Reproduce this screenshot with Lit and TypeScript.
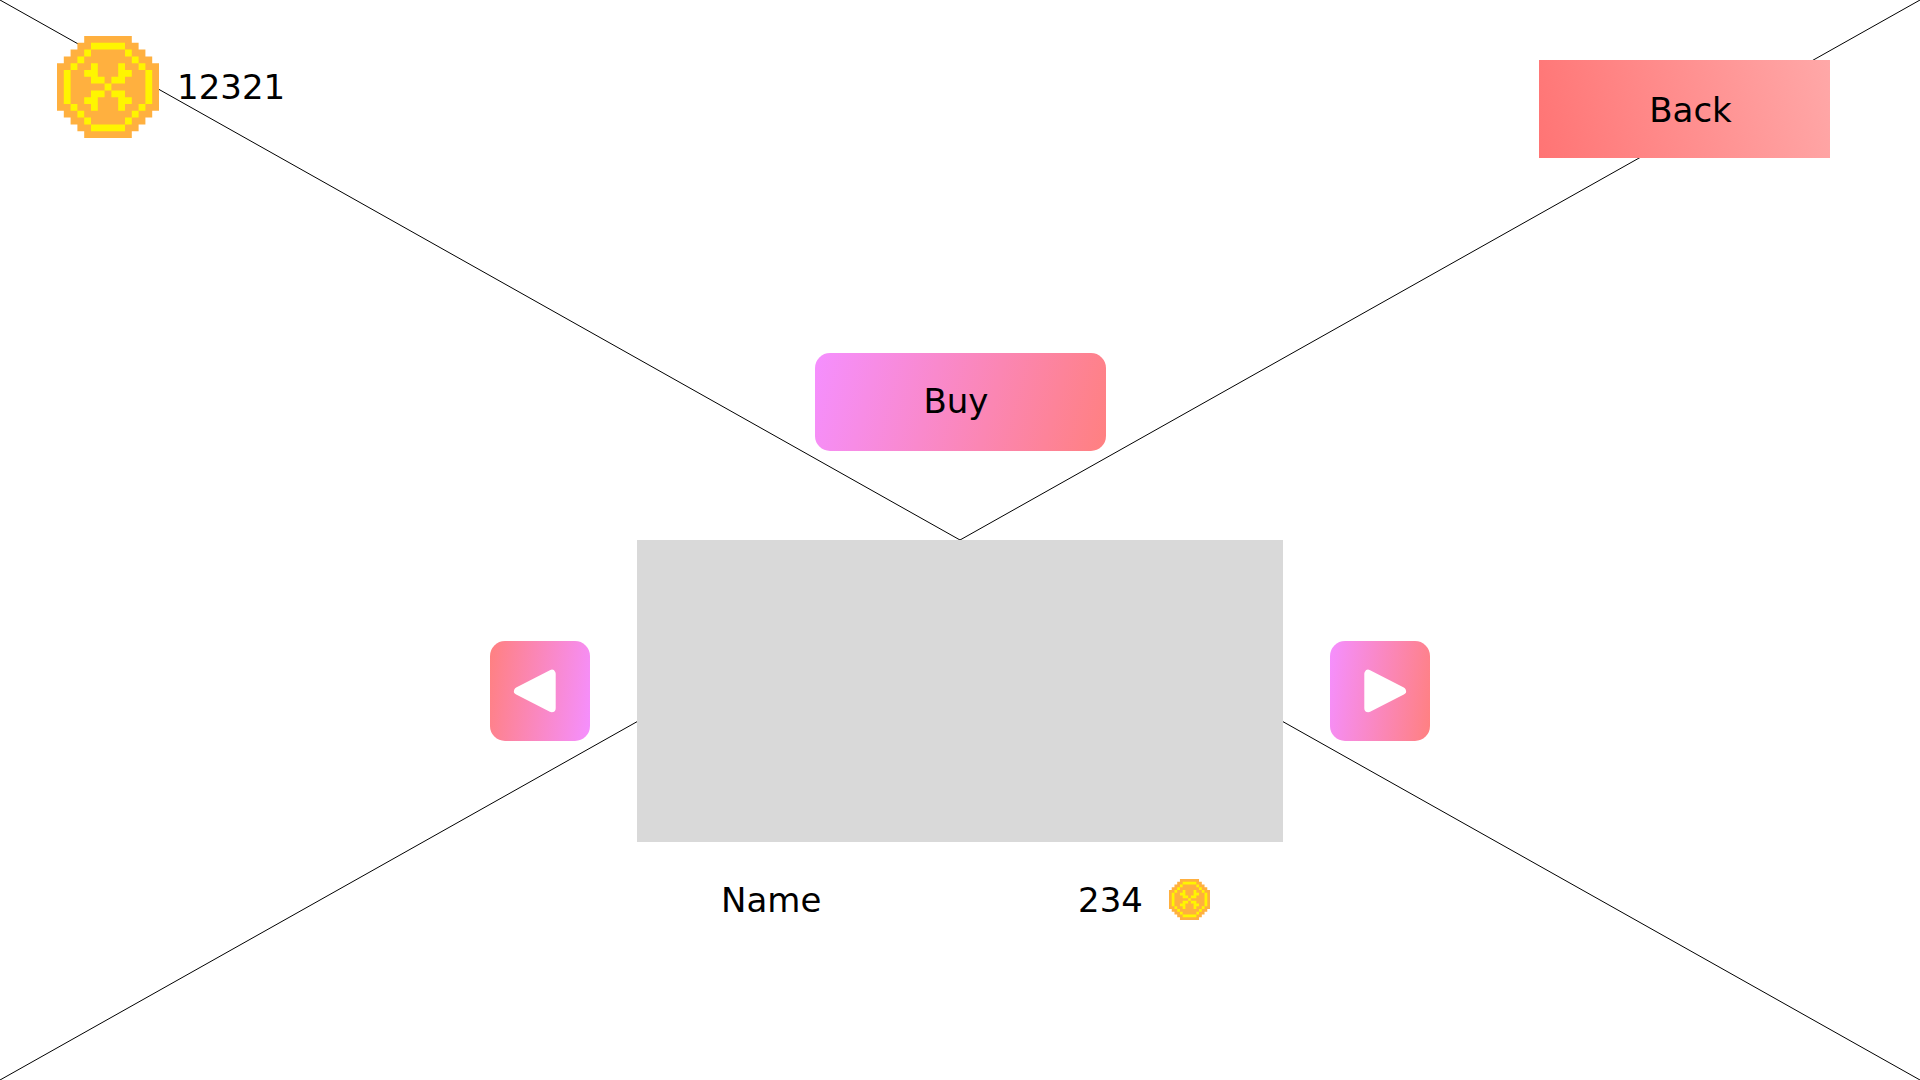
import { LitElement, html, css } from "lit";
import { customElement, property, state } from "lit/decorators.js";

// Pixel map of the coin: "o" is the orange body, "y" the yellow relief.
const COIN_ROWS = [
  "....ooooooo....",
  "...ooyyyyyoo...",
  "..ooyoooooyoo..",
  ".ooyoooooooyoo.",
  "ooyooyoooyooyoo",
  "oyooyyoooyyooyo",
  "oyoooyyoyyoooyo",
  "oyoooooyoooooyo",
  "oyoooyyoyyoooyo",
  "oyooyyoooyyooyo",
  "ooyooyoooyooyoo",
  ".ooyoooooooyoo.",
  "..ooyoooooyoo..",
  "...ooyyyyyoo...",
  "....ooooooo....",
];

// One path for all matching cells, so that neighbouring rows join without a seam.
function cellPath(pattern: RegExp): string {
  return COIN_ROWS.flatMap((row, y) =>
    [...row.matchAll(pattern)].map(
      (m) => `M${m.index} ${y}h${m[0].length}v1h-${m[0].length}z`
    )
  ).join("");
}

const BODY = cellPath(/[oy]+/g);
const RELIEF = cellPath(/y+/g);

@customElement("pixel-coin")
export class PixelCoin extends LitElement {
  static styles = css`
    :host {
      display: block;
      flex: none;
    }
    .coin {
      display: block;
      width: 100%;
      height: 100%;
    }
    .body {
      fill: #ffb03f;
    }
    .relief {
      fill: #fff500;
    }
  `;

  render() {
    return html`
      <svg class="coin" viewBox="0 0 15 15" aria-hidden="true">
        <path class="body" d=${BODY}></path>
        <path class="relief" d=${RELIEF}></path>
      </svg>
    `;
  }
}

interface Item {
  name: string;
  price: number;
}

@customElement("app-root")
export class AppRoot extends LitElement {
  static styles = css`
    :host {
      display: block;
      font-family: "DejaVu Sans", "Liberation Sans", sans-serif;
      font-size: 34px;
      line-height: 40px;
      color: #000;
    }
    .shop {
      position: relative;
      box-sizing: border-box;
      display: flex;
      flex-direction: column;
      min-height: 100vh;
      overflow: hidden;
      background: #fff;
    }
    .room {
      position: absolute;
      inset: 0;
      width: 100%;
      height: 100%;
    }
    .room line {
      stroke: #000;
      stroke-width: 1px;
      vector-effect: non-scaling-stroke;
    }
    .bar,
    .content {
      position: relative;
    }
    .bar {
      display: flex;
      justify-content: space-between;
      align-items: flex-start;
      padding: 36px 90px 0 57px;
    }
    .balance {
      display: flex;
      align-items: center;
      gap: 18px;
    }
    .balance pixel-coin {
      width: 102px;
      height: 102px;
    }
    button {
      flex: none;
      padding: 0;
      border: 0;
      font: inherit;
      color: inherit;
      cursor: pointer;
    }
    .wide {
      width: 291px;
      height: 98px;
    }
    .back {
      margin-top: 24px;
      padding: 2px 0 0 12px;
      background: linear-gradient(75deg, #ff7474, #ffa8a8);
    }
    .content {
      display: flex;
      flex-direction: column;
      align-items: center;
      padding-top: 195px;
    }
    .buy {
      padding: 0 8px 2px 0;
      border-radius: 15px;
      background: linear-gradient(105deg, #f58fff, #ff8080);
    }
    .carousel {
      display: flex;
      justify-content: center;
      align-items: center;
      gap: 47px;
      width: 100%;
      margin-top: 89px;
    }
    .step {
      width: 100px;
      height: 100px;
      border-radius: 15px;
    }
    .previous {
      background: linear-gradient(97deg, #ff8080, #f58fff);
    }
    .next {
      background: linear-gradient(97deg, #f58fff, #ff8080);
    }
    .arrow {
      display: block;
      width: 100%;
      height: 100%;
      fill: #fff;
      stroke: #fff;
      stroke-width: 8px;
      stroke-linejoin: round;
    }
    .preview {
      flex: 0 1 646px;
      height: 302px;
      background: #d9d9d9;
    }
    .details {
      box-sizing: border-box;
      display: flex;
      justify-content: space-between;
      align-items: center;
      width: 100%;
      max-width: 646px;
      margin-top: 37px;
      padding: 0 73px 0 84px;
    }
    .price {
      display: flex;
      align-items: center;
      gap: 26px;
    }
    .price pixel-coin {
      width: 41px;
      height: 41px;
    }
  `;

  @property({ type: Number }) balance = 12321;
  @property({ attribute: false }) items: Item[] = [{ name: "Name", price: 234 }];
  @state() private index = 0;

  private step(by: number) {
    const count = this.items.length;
    this.index = (this.index + by + count) % count;
  }

  private buy() {
    const { price } = this.items[this.index];
    if (this.balance >= price) this.balance -= price;
  }

  render() {
    const item = this.items[this.index];
    return html`
      <main class="shop">
        <svg class="room" viewBox="0 0 100 100" preserveAspectRatio="none" aria-hidden="true">
          <line x1="0" y1="0" x2="100" y2="100"></line>
          <line x1="100" y1="0" x2="0" y2="100"></line>
        </svg>
        <header class="bar">
          <div class="balance">
            <pixel-coin></pixel-coin>
            <span>${this.balance}</span>
          </div>
          <button class="wide back" type="button" @click=${() => history.back()}>Back</button>
        </header>
        <section class="content">
          <button class="wide buy" type="button" @click=${this.buy}>Buy</button>
          <div class="carousel">
            <button class="step previous" type="button" aria-label="Previous" @click=${() => this.step(-1)}>
              <svg class="arrow" viewBox="0 0 100 100" aria-hidden="true">
                <path d="M61.7 32.8V67.2L28 50Z"></path>
              </svg>
            </button>
            <div class="preview"></div>
            <button class="step next" type="button" aria-label="Next" @click=${() => this.step(1)}>
              <svg class="arrow" viewBox="0 0 100 100" aria-hidden="true">
                <path d="M38.3 32.8V67.2L72 50Z"></path>
              </svg>
            </button>
          </div>
          <div class="details">
            <span>${item.name}</span>
            <div class="price">
              <span>${item.price}</span>
              <pixel-coin></pixel-coin>
            </div>
          </div>
        </section>
      </main>
    `;
  }
}
